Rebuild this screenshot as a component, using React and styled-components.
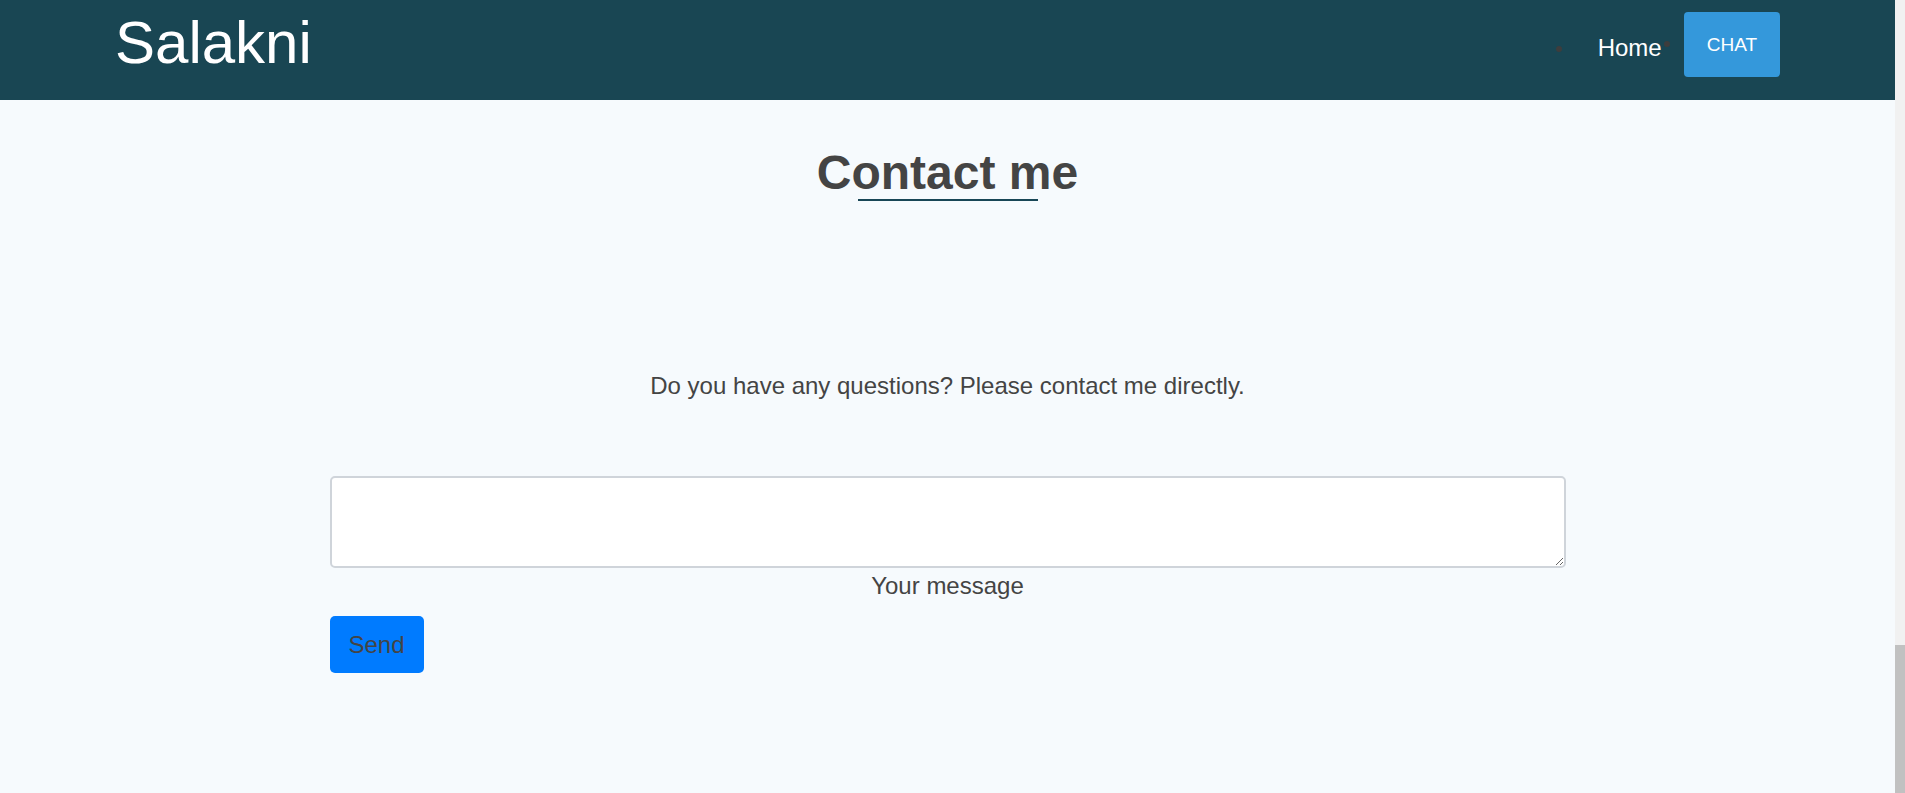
import React, { useState } from "react";
import styled, { createGlobalStyle } from "styled-components";

// the reference was shot with a 10px browser scrollbar on the right:
// keep that strip so the page centres on the same axis
const GlobalStyle = createGlobalStyle`
  body {
    margin: 0;
    min-height: 100vh;
    box-sizing: border-box;
    border-right: 10px solid #f1f1f1;
    border-image: linear-gradient(to bottom, #f1f1f1 644px, #c1c1c1 644px) 1;
    background: #f6fafd;
    font-family: "Liberation Sans", Arial, sans-serif;
    color: #444;
  }
`;

const Header = styled.header`
  height: 100px;
  padding: 0 115px;
  box-sizing: border-box;
  background: #194653;
  display: flex;
  justify-content: space-between;
  align-items: flex-start;
`;

const Logo = styled.a`
  margin-top: 8px;
  font-size: 60px;
  line-height: 69px;
  color: #fff;
  text-decoration: none;
`;

const NavList = styled.ul`
  list-style: none;
  display: flex;
  align-items: flex-start;
  margin: 12px 0 0;
  padding: 0;
`;

const NavItem = styled.li`
  position: relative;

  &::before {
    content: "";
    position: absolute;
    left: -20px;
    top: ${(p) => p.$dotTop}px;
    width: 6px;
    height: 6px;
    border-radius: 50%;
    background: #3d3d3d;
  }
`;

const NavLink = styled.a`
  display: block;
  margin-top: 18px;
  padding: 0 22px;
  font-size: 24px;
  line-height: 36px;
  color: #fff;
  text-decoration: none;
`;

const ChatButton = styled.button`
  display: block;
  height: 65px;
  padding: 0 23px;
  border: none;
  border-radius: 4px;
  background: #3498db;
  color: #fff;
  font-family: inherit;
  font-size: 19px;
  line-height: 65px;
  cursor: pointer;
`;

const Main = styled.main`
  display: flex;
  flex-direction: column;
  align-items: center;
  padding-bottom: 80px;
`;

const Title = styled.h2`
  margin: 46px 0 0;
  font-size: 48px;
  line-height: 53px;
  font-weight: 700;
  color: #444;
`;

const TitleLine = styled.div`
  width: 180px;
  height: 2px;
  background: #184656;
`;

const Intro = styled.p`
  margin: 167px 0 0;
  font-size: 24px;
  line-height: 36px;
`;

const Form = styled.form`
  width: 1236px;
  margin-top: 72px;
  display: flex;
  flex-direction: column;
`;

const MessageBox = styled.textarea`
  display: block;
  width: 100%;
  height: 92px;
  box-sizing: border-box;
  padding: 8px 12px;
  border: 2px solid #cfd4da;
  border-radius: 5px;
  background: #fff;
  font-family: inherit;
  font-size: 20px;
  color: #444;
  outline: none;
`;

const MessageLabel = styled.label`
  text-align: center;
  font-size: 24px;
  line-height: 36px;
`;

const SendButton = styled.button`
  align-self: flex-start;
  height: 57px;
  margin-top: 12px;
  padding: 0 19px;
  border: none;
  border-radius: 5px;
  background: #007bff;
  color: #444;
  font-family: inherit;
  font-size: 24px;
  line-height: 57px;
  cursor: pointer;
`;

const App = () => {
  const [message, setMessage] = useState("");

  return (
    <>
      <GlobalStyle />
      <Header>
        <Logo href="#">Salakni</Logo>
        <nav>
          <NavList>
            <NavItem $dotTop={34}>
              <NavLink href="#">Home</NavLink>
            </NavItem>
            <NavItem $dotTop={29}>
              <ChatButton type="button">CHAT</ChatButton>
            </NavItem>
          </NavList>
        </nav>
      </Header>
      <Main>
        <Title>Contact me</Title>
        <TitleLine />
        <Intro>Do you have any questions? Please contact me directly.</Intro>
        <Form onSubmit={(e) => e.preventDefault()}>
          <MessageBox
            id="message"
            value={message}
            onChange={(e) => setMessage(e.target.value)}
          />
          <MessageLabel htmlFor="message">Your message</MessageLabel>
          <SendButton type="submit">Send</SendButton>
        </Form>
      </Main>
    </>
  );
};

export default App;
